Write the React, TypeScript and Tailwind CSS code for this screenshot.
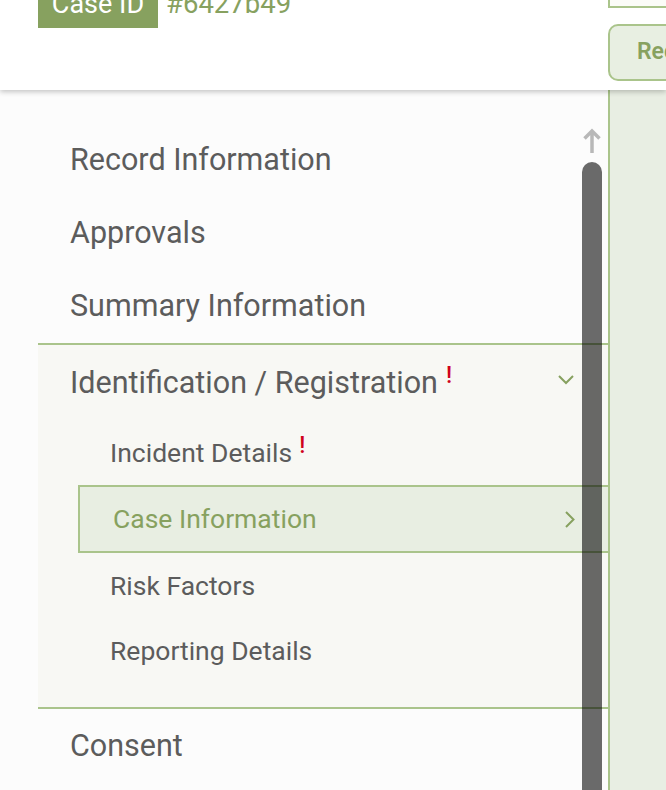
import React from "react";

const Bang = ({ cls }: { cls: string }) => (
  <span className={"text-[#d0021b] leading-none relative font-medium " + cls}>!</span>
);

export default function App() {
  return (
    <div className="w-[666px] h-[790px] overflow-hidden relative bg-[#fcfcfc] font-['Roboto',sans-serif]">
      {/* Header */}
      <div className="relative z-10 h-[90px] bg-white shadow-[0_2px_5px_rgba(0,0,0,0.22)] flex">
        <div className="w-[608px] flex items-start pl-[38px]">
          <div className="w-[120px] h-[28px] bg-[#87a15f] flex justify-center">
            <span className="text-[27px] leading-[26px] -mt-[9px] text-white">Case ID</span>
          </div>
          <span className="ml-[8px] text-[27.5px] leading-[26px] -mt-[9px] text-[#87a15f]">#6427b49</span>
        </div>
        <div className="flex-1 flex flex-col overflow-hidden">
          <div className="h-[8px] w-[120px] border-l-2 border-b-2 border-[#aac48b] bg-[#fbfcf8]"></div>
          <div className="mt-[16px] h-[57px] w-[140px] shrink-0 border-2 border-[#aac48b] rounded-[10px] bg-[#e8efe2] pl-[27px] flex items-center text-[#87a15f] font-semibold text-[23px] whitespace-nowrap">
            Record
          </div>
        </div>
      </div>

      {/* Main */}
      <div className="flex h-[700px]">
        <div className="w-[608px] pt-[33px] bg-[#fcfcfc] text-[#5c5c5c]">
          <div className="h-[73px] flex items-center pl-[70px] text-[30.5px]">Record Information</div>
          <div className="h-[73px] flex items-center pl-[70px] text-[30.5px]">Approvals</div>
          <div className="h-[74px] flex items-center pl-[70px] text-[30.5px]">Summary Information</div>

          <div className="ml-[38px] border-y-2 border-[#aac48b] bg-[#f8f8f4] pb-[24px]">
            <div className="h-[76px] flex items-center pl-[32px] pr-[34px] text-[30.5px]">
              <span>Identification / Registration</span>
              <Bang cls="text-[23px] ml-[8px] -top-[8px]" />
              <span className="flex-1" />
              <svg width="16" height="10" viewBox="0 0 16 10" className="-mt-[6px]">
                <path d="M1 1 L8 8 L15 1" fill="none" stroke="#87a15f" strokeWidth="2" />
              </svg>
            </div>
            <div className="h-[64px] flex items-center pl-[72px] text-[26.5px]">
              <span>Incident Details</span>
              <Bang cls="text-[23px] ml-[7px] -top-[8px]" />
            </div>
            <div className="ml-[40px] h-[68px] border-2 border-r-0 border-[#aac48b] bg-[#e8eee2] flex items-center pl-[33px] pr-[33px] text-[26.5px] text-[#87a15f]">
              <span>Case Information</span>
              <span className="flex-1" />
              <svg width="10" height="17" viewBox="0 0 10 17">
                <path d="M1 1 L8.5 8.5 L1 16" fill="none" stroke="#87a15f" strokeWidth="2" />
              </svg>
            </div>
            <div className="h-[66px] flex items-center pl-[72px] text-[26.5px]">Risk Factors</div>
            <div className="h-[64px] flex items-center pl-[72px] text-[26.5px]">Reporting Details</div>
          </div>

          <div className="h-[74px] flex items-center pl-[70px] text-[30.5px]">Consent</div>
        </div>
        <div className="flex-1 border-l-2 border-[#aac48b] bg-[#e8eee3]"></div>
      </div>

      {/* Scrollbar overlay */}
      <svg className="absolute left-[582px] top-[128px] z-20" width="20" height="26" viewBox="0 0 20 26">
        <path d="M10 25 V3 M2.5 10.5 L10 3 L17.5 10.5" fill="none" stroke="#b8b8b8" strokeWidth="3.5" />
      </svg>
      <div className="absolute left-[582px] top-[162px] bottom-0 w-[20px] rounded-t-[10px] bg-black/[0.58] z-20"></div>
    </div>
  );
}
